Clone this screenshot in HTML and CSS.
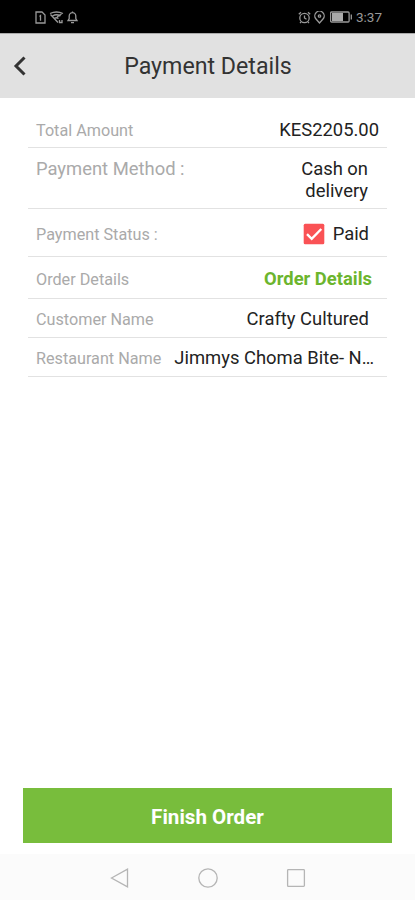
FILE: index.html
```html
<!DOCTYPE html>
<html lang="en">
  <head>
    <meta charset="UTF-8" />
    <meta name="viewport" content="width=device-width, initial-scale=1.0" />
    <title>Payment Details</title>
    <link rel="stylesheet" href="styles.css">
  </head>
  <body>
    <!-- Status bar -->
    <div class="status-bar">
      <div class="status-left">
        <svg width="11" height="13" viewBox="0 0 11 13"><path d="M1 1h6l3 3v8H1z M4.500 5.500l1-.8v5" /></svg>
        <svg width="15" height="13" viewBox="0 0 15 13"><path d="M1 2.500q6.500-3 13 0 M1.500 3.500l7.500 8 M3.500 5q4-2.500 8 0 M5.500 7.500q2-1.500 4 0 M8 6l4.500-3 M10.500 9v2.500h2.500V9" /></svg>
        <svg width="11" height="13" viewBox="0 0 11 13"><path d="M1 9.500h9l-1.200-2V5a3.300 3.300 0 0 0-6.600 0v2.500z M4 11.700h3 M5.500 .5v1" /></svg>
      </div>
      <div class="status-right">
        <svg width="13" height="13" viewBox="0 0 13 13"><circle cx="6.500" cy="7" r="4.700" /><path d="M6.500 4.500V7l2 1.200 M.8 3.200L3 1.200 M12.200 3.200L10 1.200 M3 11l-1 1 M10 11l1 1" /></svg>
        <svg width="11" height="13" viewBox="0 0 11 13"><path d="M5.500 12L2 8a4.700 4.700 0 1 1 7 0z" /><circle cx="5.500" cy="5" r="1.200" /></svg>
        <svg class="battery" width="23" height="12" viewBox="0 0 23 12"><rect x=".6" y="1" width="18.500" height="10" rx="1" /><rect class="level" x="2" y="2" width="11" height="8" /><path d="M21.300 3.500v5" /></svg>
        <span class="clock">3:37</span>
      </div>
    </div>

    <!-- Header -->
    <header class="header">
      <svg class="back" width="14" height="20" viewBox="0 0 14 20"><path d="M11.500 1.500L3 10l8.500 8.500" /></svg>
      <h1>Payment Details</h1>
    </header>

    <!-- Payment info -->
    <main class="details">
      <div class="row total">
        <span class="label">Total Amount</span>
        <span class="value">KES2205.00</span>
      </div>
      <div class="row method">
        <span class="label">Payment Method :</span>
        <span class="value">Cash on delivery</span>
      </div>
      <div class="row status">
        <span class="label">Payment Status :</span>
        <span class="value">
          <svg class="checkbox" width="22" height="22" viewBox="0 0 22 22"><rect x=".7" y=".7" width="20.600" height="20.600" rx="1.500" /><path d="M4 11.200l4.700 4.600L18.300 6" /></svg>
          Paid
        </span>
      </div>
      <div class="row order">
        <span class="label">Order Details</span>
        <a class="value link">Order Details</a>
      </div>
      <div class="row customer">
        <span class="label">Customer Name</span>
        <span class="value">Crafty Cultured</span>
      </div>
      <div class="row restaurant">
        <span class="label">Restaurant Name</span>
        <span class="value">Jimmys Choma Bite- N…</span>
      </div>
    </main>

    <button class="finish">Finish Order</button>

    <!-- Android navigation -->
    <nav class="nav-bar">
      <svg width="22" height="22" viewBox="0 0 22 22"><path d="M2.500 11L18.500 2.200v17.600z" /></svg>
      <svg width="22" height="22" viewBox="0 0 22 22"><circle cx="11" cy="11" r="9.200" /></svg>
      <svg width="22" height="22" viewBox="0 0 22 22"><rect x="2.600" y="2.600" width="16.800" height="16.800" rx=".8" /></svg>
    </nav>
  </body>
</html>
```
FILE: styles.css
```css
* {
  box-sizing: border-box;
}
body {
  margin: 0;
  height: 900px;
  display: flex;
  flex-direction: column;
  overflow: hidden;
  font-family: Roboto, sans-serif;
  background: #fff;
  color: #222;
}
svg {
  display: block;
  flex: none;
  fill: none;
}
.status-bar {
  height: 33px;
  padding: 1px 33px 0 35px;
  display: flex;
  justify-content: space-between;
  align-items: center;
  background: #000;
  color: #999;
}
.status-bar svg {
  stroke: #999;
  stroke-width: 1.3;
}
.status-left,
.status-right {
  display: flex;
  align-items: center;
  gap: 3px;
}
.status-bar .level {
  fill: #aaa;
  stroke: none;
}
.battery {
  margin-left: 2px;
}
.clock {
  font-size: 13.5px;
  line-height: 16px;
}
.header {
  height: 65px;
  display: flex;
  align-items: center;
  background: #e1e1e1;
  border-top: 1px solid #aaa;
}
.back {
  margin-left: 13px;
  stroke: #333;
  stroke-width: 3;
}
.header h1 {
  flex: 1;
  margin: 0 26px 1px 0;
  text-align: center;
  font-size: 23.2px;
  font-weight: 400;
  color: #333;
}
.details {
  flex: 1;
  padding: 14px 28px 0;
}
.row {
  display: flex;
  justify-content: space-between;
  align-items: center;
  padding: 2px 8px 0;
  border-bottom: 1px solid #e2e2e2;
}
.label {
  font-size: 16.2px;
  color: #aaa;
  white-space: nowrap;
}
.value {
  font-size: 18.4px;
  line-height: 22px;
  text-align: right;
  white-space: nowrap;
}
.total {
  height: 36px;
  padding-top: 1px;
}
.method {
  height: 61px;
  align-items: flex-start;
  padding: 10px 19px 0 8px;
}
.method .label {
  font-size: 18.4px;
  line-height: 22px;
}
.method .value {
  width: 70px;
  white-space: normal;
}
.status {
  height: 48px;
  padding-right: 18px;
}
.status .label {
  padding-top: 2px;
}
.status .value {
  display: flex;
  align-items: center;
  gap: 8px;
}
.checkbox rect {
  fill: #fa5255;
}
.checkbox path {
  stroke: #fff;
  stroke-width: 2.4;
}
.order {
  height: 42px;
  padding-right: 15px;
}
.order .label {
  padding-top: 2px;
}
.link {
  font-weight: 700;
  color: #6cb52d;
}
.customer {
  height: 39px;
  padding-right: 18px;
}
.restaurant {
  height: 39px;
  padding-right: 13px;
}
.finish {
  height: 55px;
  margin: 0 23px 11px;
  padding: 2px 0 0;
  border: none;
  background: #78bd3c;
  color: #fff;
  font-family: inherit;
  font-size: 20.6px;
  font-weight: 700;
}
.nav-bar {
  height: 46px;
  padding-top: 2px;
  display: flex;
  justify-content: center;
  align-items: center;
  gap: 66px;
  background: #fbfbfb;
}
.nav-bar svg {
  stroke: #b5b5b5;
  stroke-width: 1.3;
}
```
